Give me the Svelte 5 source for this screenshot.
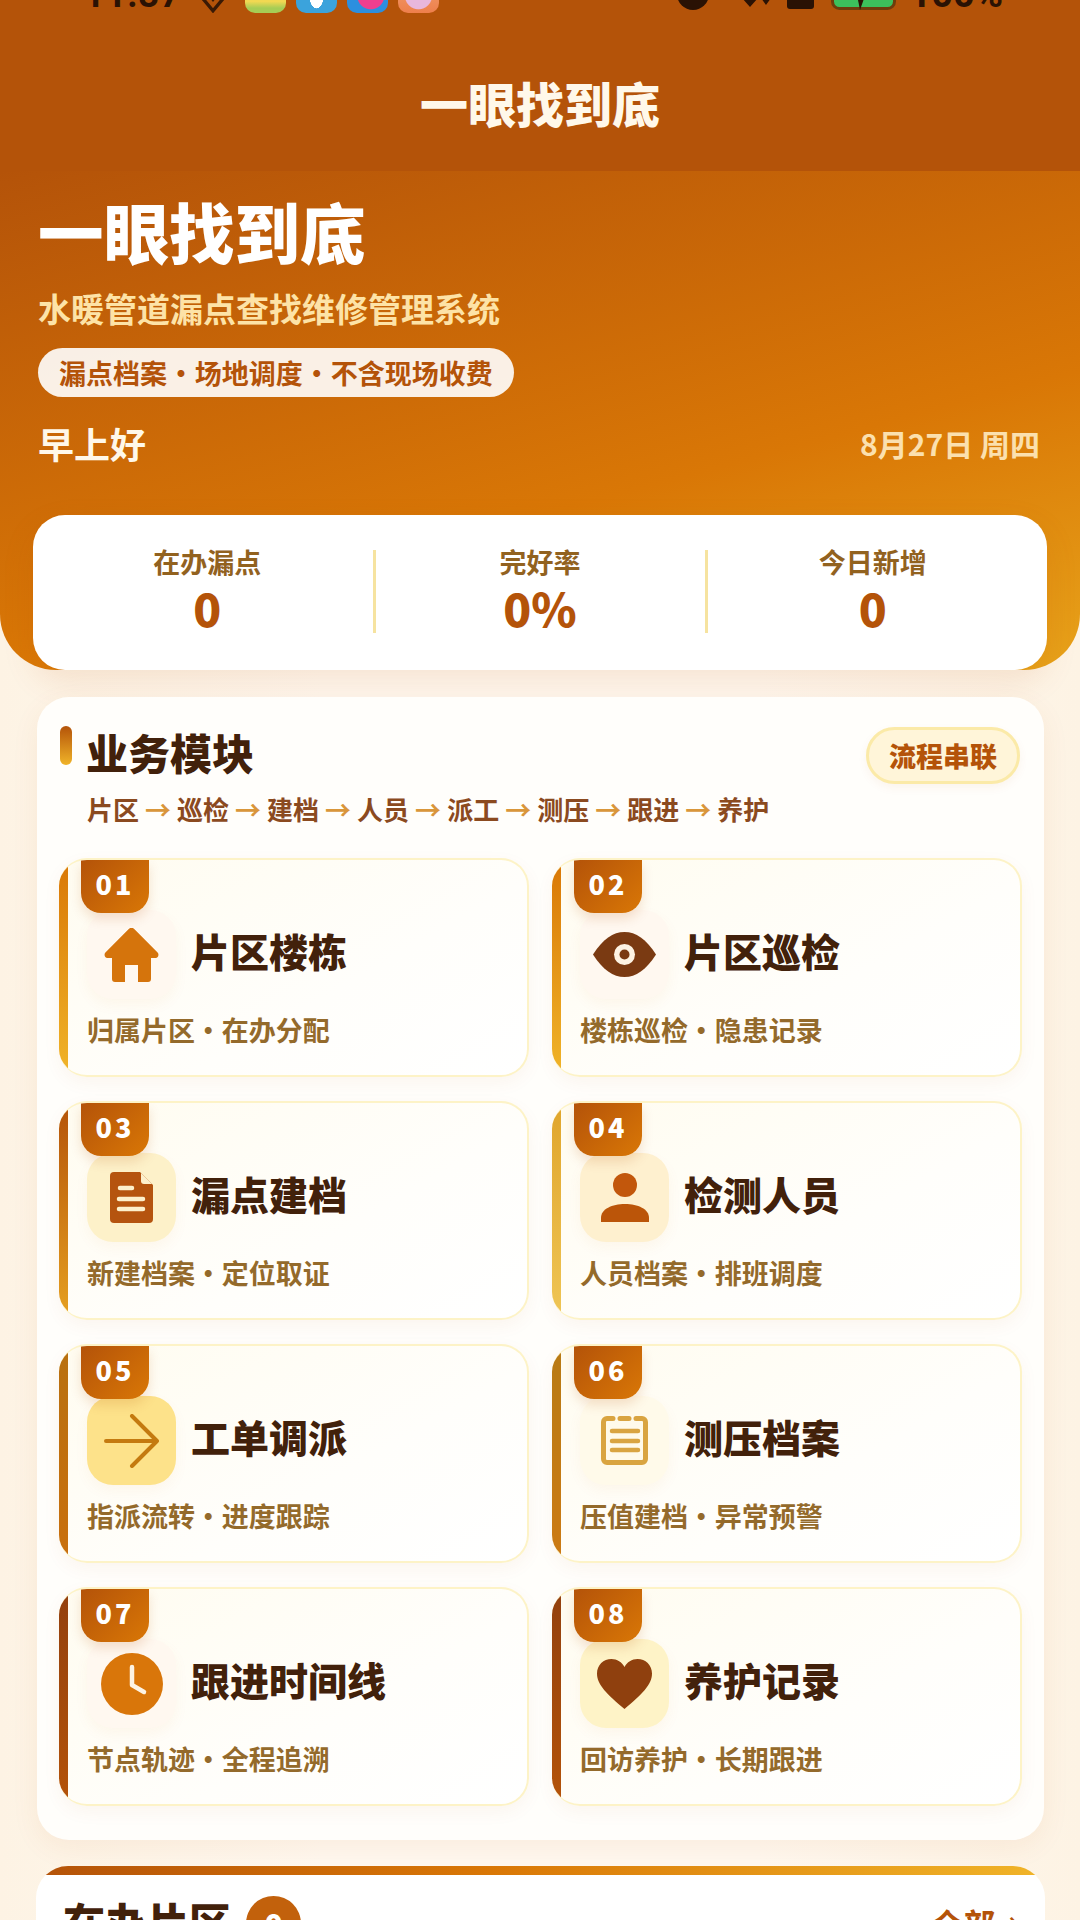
<script lang="ts">
	const steps = ['片区', '巡检', '建档', '人员', '派工', '测压', '跟进', '养护'];

	const stats = [
		{ label: '在办漏点', value: '0' },
		{ label: '完好率', value: '0%' },
		{ label: '今日新增', value: '0' }
	];

	const modules = [
		{ no: '01', name: '片区楼栋', desc: '归属片区 · 在办分配', icon: 'home' },
		{ no: '02', name: '片区巡检', desc: '楼栋巡检 · 隐患记录', icon: 'eye' },
		{ no: '03', name: '漏点建档', desc: '新建档案 · 定位取证', icon: 'doc' },
		{ no: '04', name: '检测人员', desc: '人员档案 · 排班调度', icon: 'user' },
		{ no: '05', name: '工单调派', desc: '指派流转 · 进度跟踪', icon: 'arrow' },
		{ no: '06', name: '测压档案', desc: '压值建档 · 异常预警', icon: 'note' },
		{ no: '07', name: '跟进时间线', desc: '节点轨迹 · 全程追溯', icon: 'clock' },
		{ no: '08', name: '养护记录', desc: '回访养护 · 长期跟进', icon: 'heart' }
	];
</script>

<div class="page">
	<header class="top">
		<div class="status">
			<div class="status-side">
				<span class="time">11:37</span>
				<svg class="diamond" width="30" height="30" viewBox="0 0 27 27">
					<path d="M1 10 13.5 25 26 10 19 2H8Z" fill="none" stroke="#3a1a05" stroke-width="3" />
					<path d="M8 10 13.5 17 19 10Z" fill="#3a1a05" />
				</svg>
				<i class="app app-green"></i>
				<i class="app app-blue"></i>
				<i class="app app-ball"></i>
				<i class="app app-peach"></i>
			</div>
			<div class="status-side right">
				<i class="dot"></i>
				<svg class="signal" width="30" height="16" viewBox="0 0 30 16">
					<path d="M1 6H17L9 15ZM20 6H30L25 13Z" fill="#2a1204" />
				</svg>
				<i class="sim"></i>
				<svg class="battery" width="65" height="30" viewBox="0 0 65 30">
					<rect x="1.5" y="1.5" width="62" height="27" rx="7" fill="#3cc05c" stroke="#6e3d0c" stroke-width="3" />
					<path d="M36 10 29 30 27 20Z" fill="#2a1204" />
				</svg>
				<span class="percent">100%</span>
			</div>
		</div>
		<h1 class="bar-title">一眼找到底</h1>
	</header>

	<section class="hero">
		<div class="hero-text">
			<h2>一眼找到底</h2>
			<p class="subtitle">水暖管道漏点查找维修管理系统</p>
			<p class="chip">漏点档案 · 场地调度 · 不含现场收费</p>
			<div class="greet">
				<span class="hello">早上好</span>
				<span class="date">8月27日 周四</span>
			</div>
		</div>
		<div class="stats">
			{#each stats as s}
				<div class="stat">
					<span class="stat-label">{s.label}</span>
					<strong>{s.value}</strong>
				</div>
			{/each}
		</div>
	</section>

	<section class="modules">
		<div class="modules-head">
			<div>
				<div class="heading">
					<i class="accent"></i>
					<h3>业务模块</h3>
				</div>
				<div class="flow">
					{#each steps as step, i}
						{#if i > 0}<span class="flow-arrow">→</span>{/if}
						<span>{step}</span>
					{/each}
				</div>
			</div>
			<span class="pill">流程串联</span>
		</div>

		<div class="grid">
			{#each modules as m}
				<article class="card card-{m.no}">
					<span class="no">{m.no}</span>
					<div class="card-head">
						<div class="tile">
							{#if m.icon === 'home'}
								<svg width="55" height="54" viewBox="0 0 55 54">
									<path d="M24.5 1.2a4 4 0 0 1 6 0L53.6 24.6c1.8 2 .6 5.4-2 5.4H47V51a3 3 0 0 1-3 3H34V37H21V54H11a3 3 0 0 1-3-3V30H3.4c-2.600 0-3.800-3.400-2-5.400Z" fill="#d5740c" />
								</svg>
							{:else if m.icon === 'eye'}
								<svg width="63" height="45" viewBox="0 0 63 45">
									<path d="M0 22.500C10 7 20 0 31.500 0S53 7 63 22.500C53 38 43 45 31.500 45S10 38 0 22.500Z" fill="#7a3a12" />
									<circle cx="31.500" cy="22.500" r="10.500" fill="#fdf3e3" />
									<circle cx="31.500" cy="22.500" r="5" fill="#7a3a12" />
								</svg>
							{:else if m.icon === 'doc'}
								<svg width="43" height="51" viewBox="0 0 43 51">
									<path d="M4 0H30L43 13V47a4 4 0 0 1-4 4H4a4 4 0 0 1-4-4V4a4 4 0 0 1 4-4Z" fill="#b5540f" />
									<path d="M31 1 42 12H34a3 3 0 0 1-3-3Z" fill="#fdf0cc" />
									<path d="M10 16H22M9 27H33M9 37H33" stroke="#fdf0cc" stroke-width="4.500" stroke-linecap="round" />
								</svg>
							{:else if m.icon === 'user'}
								<svg width="48" height="49" viewBox="0 0 48 49">
									<circle cx="24" cy="12" r="12" fill="#c2570c" />
									<path d="M0 49V45C0 36 11 31 24 31S48 36 48 45V49Z" fill="#bb5509" />
								</svg>
							{:else if m.icon === 'arrow'}
								<svg width="55" height="54" viewBox="0 0 55 54">
									<path d="M2 27H53M28 2 53 27 28 52" fill="none" stroke="#c47a10" stroke-width="4" stroke-linecap="round" stroke-linejoin="round" />
								</svg>
							{:else if m.icon === 'note'}
								<svg width="47" height="49" viewBox="0 0 47 49">
									<path d="M12 2.500H6a3.500 3.500 0 0 0-3.500 3.500V43a3.500 3.500 0 0 0 3.500 3.500H41a3.500 3.500 0 0 0 3.500-3.500V6A3.500 3.500 0 0 0 41 2.500H35M19 2.500H28" fill="none" stroke="#d9a441" stroke-width="5" stroke-linecap="round" />
									<path d="M11 15H37M11 25H37M11 34H37" stroke="#d9a441" stroke-width="4.500" stroke-linecap="round" />
								</svg>
							{:else if m.icon === 'clock'}
								<svg width="62" height="62" viewBox="0 0 62 62">
									<circle cx="31" cy="31" r="31" fill="#d9760a" />
									<path d="M31 14V32L43 39" fill="none" stroke="#fdf3e3" stroke-width="4.500" stroke-linecap="round" stroke-linejoin="round" />
								</svg>
							{:else}
								<svg width="55" height="50" viewBox="0 0 55 50">
									<path d="M27.500 50C10 35 0 26 0 14.500 0 6 6.500 0 14.500 0 20 0 25 3 27.500 8 30 3 35 0 40.500 0 48.500 0 55 6 55 14.500 55 26 45 35 27.500 50Z" fill="#8f400e" />
								</svg>
							{/if}
						</div>
						<h4>{m.name}</h4>
					</div>
					<p class="desc">{m.desc}</p>
				</article>
			{/each}
		</div>
	</section>

	<section class="active">
		<i class="active-bar"></i>
		<div class="active-head">
			<h3>在办片区</h3>
			<span class="count">0</span>
			<span class="all">全部 <b>›</b></span>
		</div>
	</section>
</div>

<style>
	:global(body) {
		margin: 0;
	}

	.page {
		width: 1080px;
		height: 1920px;
		overflow: hidden;
		background: linear-gradient(90deg, #fdf3e4 0, #fff8ef 30%, #fff8ef 70%, #fdf3e4 100%);
		font-family: 'Noto Sans CJK SC', 'Noto Sans', sans-serif;
	}

	h1,
	h2,
	h3,
	h4,
	p {
		margin: 0;
	}

	i {
		display: block;
	}

	.top {
		height: 171px;
		background: #b45309;
	}

	.status {
		display: flex;
		justify-content: space-between;
		align-items: flex-end;
		height: 14px;
		padding: 0 77px 0 84px;
		overflow: hidden;
	}

	.status-side {
		display: flex;
		align-items: flex-end;
	}

	.time {
		width: 114px;
		margin-bottom: 2px;
		font: 700 36px/34px Roboto, sans-serif;
		letter-spacing: 1px;
		color: #2a1204;
	}

	.diamond {
		margin-bottom: 1px;
	}

	.app {
		width: 41px;
		height: 41px;
		margin-left: 10px;
		margin-bottom: 1px;
		border-radius: 10px;
	}

	.diamond + .app {
		margin-left: 17px;
	}

	.app-green {
		background: linear-gradient(#f1d852 72%, #a6cd55 88%);
	}

	.app-blue {
		background: radial-gradient(ellipse 7px 12px at 50% 60%, #fff 0 96%, transparent), #3ba3dc;
	}

	.app-ball {
		background: radial-gradient(circle at 58% 58%, #ef3f8f 0 13px, transparent 14px), #2c8fdf;
	}

	.app-peach {
		background: radial-gradient(circle at 50% 58%, #e8b7dc 0 13px, transparent 14px), linear-gradient(#f3a873, #ee7f4c);
	}

	.right .dot {
		width: 32px;
		height: 32px;
		margin-bottom: 4px;
		border-radius: 50%;
		background: #2a1204;
	}

	.signal {
		margin: 0 16px 6px 32px;
	}

	.sim {
		width: 27px;
		height: 24px;
		margin-bottom: 5px;
		border-radius: 3px;
		background: #2a1204;
	}

	.battery {
		margin: 0 14px 4px 17px;
	}

	.percent {
		margin-bottom: 3px;
		font: 700 38px/34px Roboto, sans-serif;
		color: #2a1204;
	}

	.bar-title {
		margin-top: 54px;
		font-size: 48px;
		line-height: 68px;
		font-weight: 900;
		text-align: center;
		color: #fff8ea;
	}

	.hero {
		height: 499px;
		padding: 0 33px;
		box-sizing: border-box;
		border-radius: 0 0 56px 56px;
		background: linear-gradient(165deg, #b45309 0%, #d97706 62%, #e8a31a 100%);
	}

	.hero-text {
		padding: 24px 7px 0 5px;
	}

	h2 {
		font-size: 65.5px;
		line-height: 72px;
		font-weight: 900;
		color: #fff;
	}

	.subtitle {
		margin-top: 19px;
		font-size: 33px;
		line-height: 44px;
		font-weight: 700;
		color: #fde3a7;
	}

	.chip {
		display: inline-block;
		margin-top: 18px;
		padding: 0 21px;
		border-radius: 25px;
		background: rgba(255, 255, 255, 0.9);
		font-size: 27px;
		line-height: 49px;
		font-weight: 700;
		word-spacing: -5.7px;
		color: #b45309;
	}

	.greet {
		display: flex;
		justify-content: space-between;
		align-items: center;
		margin-top: 21px;
	}

	.hello {
		font-size: 36px;
		line-height: 50px;
		font-weight: 700;
		color: #fff8ea;
	}

	.date {
		font-size: 30px;
		font-weight: 700;
		color: #fbe0ae;
	}

	.stats {
		display: grid;
		grid-template-columns: repeat(3, 1fr);
		height: 155px;
		margin-top: 47px;
		padding: 0 8px;
		border-radius: 32px;
		background: #fff;
		box-shadow: 0 12px 32px rgba(180, 83, 9, 0.12);
	}

	.stat {
		display: flex;
		flex-direction: column;
		align-items: center;
		position: relative;
		padding-top: 30px;
	}

	.stat + .stat::before {
		content: '';
		position: absolute;
		left: -1px;
		top: 35px;
		width: 3px;
		height: 83px;
		background: #f6e3a0;
	}

	.stat-label {
		font-size: 27px;
		line-height: 34px;
		font-weight: 700;
		color: #92621f;
	}

	.stat strong {
		margin-top: 1px;
		font-size: 46px;
		line-height: 54px;
		font-weight: 900;
		color: #b45309;
	}

	.modules {
		height: 1143px;
		box-sizing: border-box;
		margin: 27px 36px 0 37px;
		padding: 30px 22px 0;
		border-radius: 32px;
		background: #fffefb;
		box-shadow: 0 8px 28px rgba(180, 83, 9, 0.07);
	}

	.modules-head {
		display: flex;
		justify-content: space-between;
		align-items: flex-start;
		padding-right: 2px;
	}

	.heading {
		display: flex;
		gap: 14px;
		padding-left: 1px;
	}

	.accent {
		width: 12px;
		height: 39px;
		margin-top: -1px;
		border-radius: 6px;
		background: linear-gradient(#b45309, #f0b429);
	}

	.heading h3 {
		font-size: 42px;
		line-height: 50px;
		font-weight: 900;
		color: #42210b;
	}

	.flow {
		display: flex;
		gap: 6px;
		margin-top: 14px;
		padding-left: 28px;
		font-size: 26px;
		line-height: 36px;
		font-weight: 600;
		color: #8b4a1f;
	}

	.flow-arrow {
		font-weight: 700;
		color: #d9963a;
	}

	.pill {
		padding: 0 20px;
		border: 3px solid #fbeaa8;
		border-radius: 29px;
		background: #fff5d9;
		font-size: 27px;
		line-height: 51px;
		font-weight: 800;
		color: #b45309;
		box-shadow: 0 4px 10px rgba(180, 83, 9, 0.06);
	}

	.grid {
		display: grid;
		grid-template-columns: 1fr 1fr;
		gap: 24px 23px;
		margin-top: 31px;
	}

	.card {
		position: relative;
		height: 219px;
		box-sizing: border-box;
		padding: 50px 20px 0 28px;
		overflow: hidden;
		border: 2px solid #fdf3c7;
		border-left: 0;
		border-radius: 28px;
		background: linear-gradient(150deg, #fffcf0, #fffefb 60%, #fff);
		box-shadow: 0 6px 18px rgba(180, 83, 9, 0.05);
	}

	.card::before {
		content: '';
		position: absolute;
		left: 0;
		top: 0;
		bottom: 0;
		width: 9px;
		background: linear-gradient(#d97706, #f0b429);
	}

	.card-03::before {
		background: linear-gradient(#b45309, #e6a020);
	}

	.card-04::before {
		background: linear-gradient(#e0a52c, #efc555);
	}

	.card-05::before {
		background: linear-gradient(#b8700f, #c9700e);
	}

	.card-06::before {
		background: linear-gradient(#b87a14, #cc7a14);
	}

	.card-07::before,
	.card-08::before {
		background: linear-gradient(#92400e, #b45309);
	}

	.no {
		position: absolute;
		left: 22px;
		top: 0;
		z-index: 1;
		width: 68px;
		height: 53px;
		border-radius: 0 0 20px 20px;
		background: linear-gradient(135deg, #b45309, #d97706);
		box-shadow: 0 6px 12px rgba(180, 83, 9, 0.16);
		font-size: 27px;
		line-height: 48px;
		font-weight: 900;
		letter-spacing: 3px;
		text-align: center;
		color: #fff;
	}

	.card-head {
		display: flex;
		align-items: center;
		gap: 15px;
	}

	.tile {
		display: flex;
		align-items: center;
		justify-content: center;
		width: 89px;
		height: 89px;
		flex: none;
		border-radius: 26px;
		background: #fff8f0;
		box-shadow: 0 6px 14px rgba(217, 119, 6, 0.05);
	}

	.card-03 .tile {
		background: #fdf1c9;
	}

	.card-04 .tile {
		background: #fef0cf;
	}

	.card-05 .tile {
		background: #fde28a;
	}

	.card-06 .tile {
		background: #fffaea;
	}

	.card-08 .tile {
		background: #fef3c7;
	}

	h4 {
		margin-bottom: 10px;
		font-size: 39px;
		line-height: 52px;
		font-weight: 900;
		color: #42210b;
	}

	.desc {
		margin-top: 13px;
		font-size: 27px;
		line-height: 36px;
		font-weight: 600;
		word-spacing: -6.3px;
		color: #946a2b;
	}

	.active {
		margin: 26px 35px 0 36px;
		height: 200px;
		overflow: hidden;
		border-radius: 32px 32px 0 0;
		background: #fff;
	}

	.active-bar {
		height: 9px;
		background: linear-gradient(90deg, #b45309, #d97706 45%, #f0b429);
	}

	.active-head {
		display: flex;
		align-items: flex-start;
		gap: 15px;
		padding: 21px 25px 0 27px;
	}

	.active-head h3 {
		margin-top: -2px;
		font-size: 42px;
		line-height: 53px;
		font-weight: 900;
		color: #42210b;
	}

	.count {
		width: 55px;
		height: 55px;
		border-radius: 50%;
		background: #c2610c;
		font-size: 30px;
		line-height: 55px;
		font-weight: 900;
		text-align: center;
		color: #fff;
	}

	.all {
		margin-left: auto;
		margin-top: 4px;
		font-size: 32px;
		line-height: 40px;
		font-weight: 700;
		color: #b45309;
	}

	.all b {
		margin-left: 5px;
		font-size: 40px;
		font-weight: 500;
	}
</style>
